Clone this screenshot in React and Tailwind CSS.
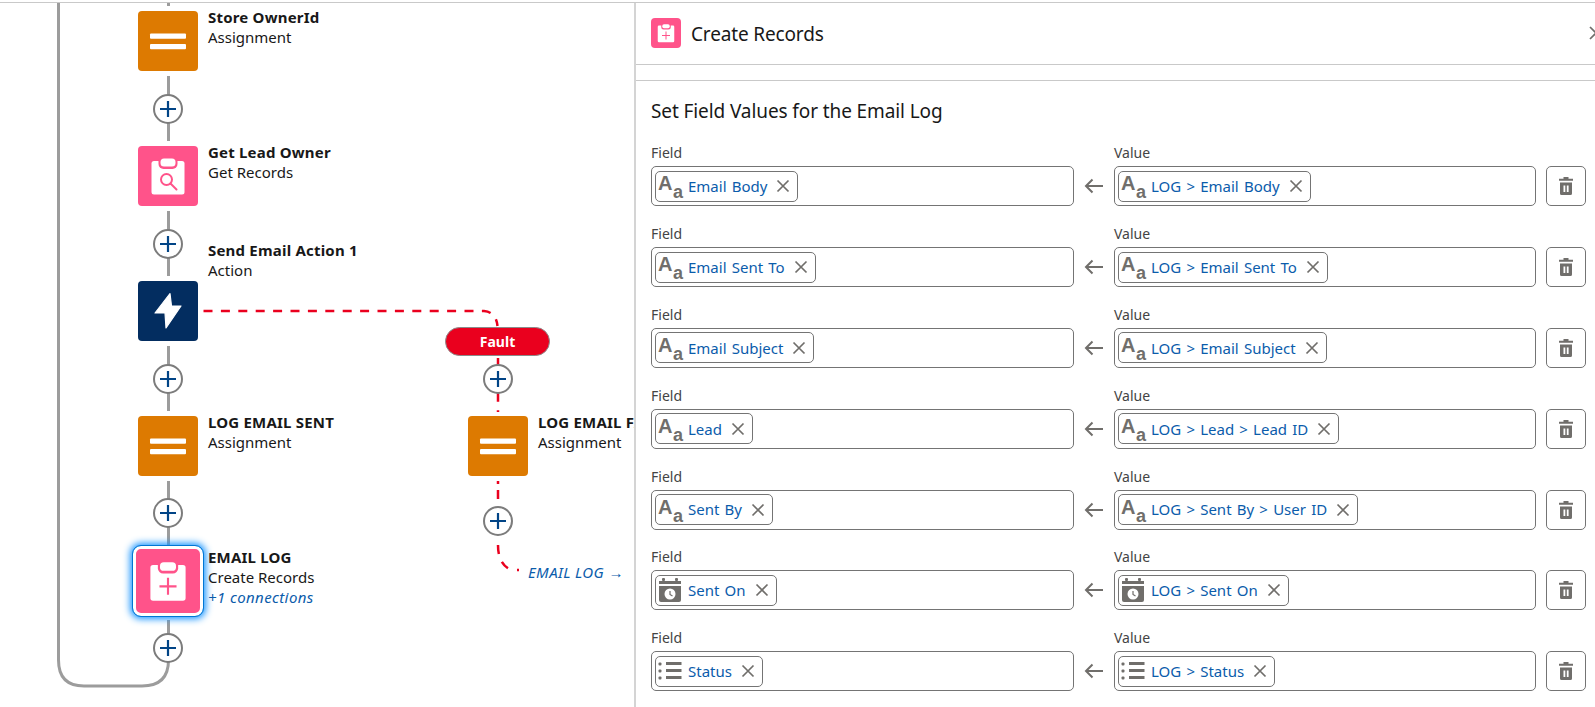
import { Fragment } from 'react';

const font = { fontFamily: '"Noto Sans", "Open Sans", sans-serif' };

function AssignmentGlyph() {
  return (
    <svg viewBox="0 0 60 60" className="w-full h-full">
      <rect x="12" y="22.5" width="36" height="5.2" rx="1" fill="#fff" />
      <rect x="12" y="33" width="36" height="5.2" rx="1" fill="#fff" />
    </svg>
  );
}

function BoltGlyph() {
  return (
    <svg viewBox="0 0 60 60" className="w-full h-full">
      <path d="M32 12.5 L17 32 H27 L28 47 L43 25 H33.5 Z" fill="#fff" stroke="#fff" strokeWidth="1.2" strokeLinejoin="round" />
    </svg>
  );
}

function Clipboard({ kind }) {
  return (
    <svg viewBox="0 0 60 60" className="w-full h-full">
      <rect x="13.5" y="15" width="33" height="33.5" rx="2.5" fill="#fff" />
      <rect x="20.5" y="10.5" width="19" height="12.5" rx="5" fill="#ff538a" />
      <rect x="22.5" y="12.5" width="15" height="8" rx="3.5" fill="#fff" />
      {kind === 'search' ? (
        <g fill="none" stroke="#ff538a" strokeWidth="2">
          <circle cx="28.5" cy="33.5" r="5.5" />
          <path d="M32.5 37.5 L38.5 43.5" strokeLinecap="round" />
        </g>
      ) : (
        <path d="M30 27 V43 M22 35 H38" stroke="#ff538a" strokeWidth="2" fill="none" />
      )}
    </svg>
  );
}

function NodeLabel({ x, y, title, sub, extra }) {
  return (
    <div className="absolute whitespace-nowrap text-[15px] leading-[20px] text-[#181818]" style={{ left: x, top: y }}>
      <div className="font-bold tracking-[0.2px]">{title}</div>
      <div>{sub}</div>
      {extra && <div className="italic tracking-[0.4px] text-[#0b5cab]">{extra}</div>}
    </div>
  );
}

const PLUS = [[168, 109], [168, 244], [168, 379], [168, 513], [168, 648], [498, 379], [498, 521]];

function Connectors() {
  return (
    <svg className="absolute left-0 top-0" width="634" height="704" viewBox="0 3 634 704" fill="none">
      <g stroke="#9c9c9c" strokeWidth="3">
        <path d="M58.5 3 V660 Q58.5 686 84 686 H142 Q168.5 686 168.5 660 V620" />
        <path d="M168.5 3 V6 M168.5 76 V141 M168.5 211 V276 M168.5 346 V411 M168.5 481 V545" />
      </g>
      <g stroke="#ea001e" strokeWidth="2.5" strokeDasharray="9 8.4">
        <path d="M203.5 311 H484 Q496 312 497.5 326" />
        <path d="M498 358 V412" />
        <path d="M498 481 V484" strokeDasharray="none" />
        <path d="M498 490 V536" />
        <path d="M498 545 Q498 564 511 570" />
        <path d="M517 570 H519" strokeDasharray="none" />
      </g>
      {PLUS.map(([cx, cy]) => (
        <Fragment key={`${cx}-${cy}`}>
          <circle cx={cx} cy={cy} r="14" fill="#fff" stroke="#7c7c7c" strokeWidth="2" />
          <path d={`M${cx - 8} ${cy} H${cx + 8} M${cx} ${cy - 8} V${cy + 8}`} stroke="#014486" strokeWidth="2.2" />
        </Fragment>
      ))}
    </svg>
  );
}

function Canvas() {
  return (
    <div className="relative w-[634px] h-full shrink-0 overflow-hidden">
      <Connectors />
      <div className="absolute left-[138px] top-[8px] w-[60px] h-[60px] rounded bg-[#dd7a01]"><AssignmentGlyph /></div>
      <NodeLabel x={208} y={4} title="Store OwnerId" sub="Assignment" />

      <div className="absolute left-[138px] top-[143px] w-[60px] h-[60px] rounded bg-[#ff538a]"><Clipboard kind="search" /></div>
      <NodeLabel x={208} y={139} title="Get Lead Owner" sub="Get Records" />

      <div className="absolute left-[138px] top-[278px] w-[60px] h-[60px] rounded bg-[#032d60]"><BoltGlyph /></div>
      <NodeLabel x={208} y={237} title="Send Email Action 1" sub="Action" />

      <div className="absolute left-[138px] top-[413px] w-[60px] h-[60px] rounded bg-[#dd7a01]"><AssignmentGlyph /></div>
      <NodeLabel x={208} y={409} title="LOG EMAIL SENT" sub="Assignment" />

      <div className="absolute left-[133px] top-[543px] w-[70px] h-[70px] rounded-lg bg-[#ff538a] border-[3px] border-white outline-[1.5px] outline-[#0176d3] shadow-[0_0_7px_3px_#1b96ff]">
        <Clipboard kind="create" />
      </div>
      <NodeLabel x={208} y={544} title="EMAIL LOG" sub="Create Records" extra="+1 connections" />

      <div className="absolute left-[445px] top-[324px] w-[105px] h-[29px] rounded-full bg-[#ea001e] border border-[#8a8a8a] flex items-center justify-center text-white font-bold text-[14px]">Fault</div>

      <div className="absolute left-[468px] top-[413px] w-[60px] h-[60px] rounded bg-[#dd7a01]"><AssignmentGlyph /></div>
      <NodeLabel x={538} y={409} title="LOG EMAIL FAILED" sub="Assignment" />

      <div className="absolute left-[528px] top-[559px] whitespace-nowrap italic text-[15px] leading-[20px] tracking-[0.4px] text-[#0b5cab]">EMAIL LOG →</div>
    </div>
  );
}

function TextIcon() {
  return (
    <div className="w-[25px] h-[24px] shrink-0 flex items-start font-bold text-[#706e6b] [font-family:'Liberation_Sans',sans-serif]">
      <span className="text-[20px] leading-[18px]">A</span>
      <span className="ml-[0.5px] mt-[9px] text-[18px] leading-[18px]">a</span>
    </div>
  );
}

function CalendarIcon() {
  return (
    <svg width="25" height="24" viewBox="0 0 25 24" className="shrink-0">
      <rect x="4" y="0" width="3" height="3" rx="1" fill="#706e6b" />
      <rect x="17" y="0" width="3" height="3" rx="1" fill="#706e6b" />
      <path d="M1 3 H23 V6 H1 Z" fill="#706e6b" />
      <path d="M1 8 H23 V22 a2 2 0 0 1 -2 2 H3 a2 2 0 0 1 -2 -2 Z" fill="#706e6b" />
      <circle cx="12" cy="16" r="5.5" fill="#fff" />
      <path d="M12 13 V16.5 L14.5 18" stroke="#706e6b" strokeWidth="1.2" fill="none" />
    </svg>
  );
}

function ListIcon() {
  return (
    <svg width="25" height="24" viewBox="0 0 25 24" className="shrink-0">
      <rect x="0.5" y="3.5" width="3" height="3" rx="1" fill="#706e6b" />
      <rect x="0.5" y="10.5" width="3" height="3" rx="1" fill="#706e6b" />
      <rect x="0.5" y="17.5" width="3" height="3" rx="1" fill="#706e6b" />
      <rect x="8" y="3" width="15.5" height="3" fill="#706e6b" />
      <rect x="8" y="10" width="15.5" height="3" fill="#706e6b" />
      <rect x="8" y="17" width="15.5" height="3" fill="#706e6b" />
    </svg>
  );
}

function Pill({ type, text }) {
  return (
    <div className="h-[31px] inline-flex items-center gap-[5px] pl-[2px] pr-[7px] border border-[#747474] rounded-[5px] bg-white">
      {type === 'text' && <TextIcon />}
      {type === 'date' && <CalendarIcon />}
      {type === 'list' && <ListIcon />}
      <span className="text-[15px] [word-spacing:1.3px] text-[#0b5cab] whitespace-nowrap">{text}</span>
      <svg width="14" height="14" viewBox="0 0 14 14" className="ml-[4px] shrink-0">
        <path d="M1.5 1.5 L12.5 12.5 M12.5 1.5 L1.5 12.5" stroke="#706e6b" strokeWidth="1.7" />
      </svg>
    </div>
  );
}

function TrashIcon() {
  return (
    <svg width="16" height="18" viewBox="0 0 16 18">
      <path d="M5.5 0 H10.5 V1.8 H15 V3.8 H1 V1.8 H5.5 Z" fill="#706e6b" />
      <path d="M2 5.5 H14 V16.5 a1.5 1.5 0 0 1 -1.5 1.5 H3.5 A1.5 1.5 0 0 1 2 16.5 Z" fill="#706e6b" />
      <rect x="5.5" y="8.5" width="1.8" height="6.5" fill="#fff" />
      <rect x="8.8" y="8.5" width="1.8" height="6.5" fill="#fff" />
    </svg>
  );
}

const ROWS = [
  { type: 'text', field: 'Email Body', value: 'LOG > Email Body' },
  { type: 'text', field: 'Email Sent To', value: 'LOG > Email Sent To' },
  { type: 'text', field: 'Email Subject', value: 'LOG > Email Subject' },
  { type: 'text', field: 'Lead', value: 'LOG > Lead > Lead ID' },
  { type: 'text', field: 'Sent By', value: 'LOG > Sent By > User ID' },
  { type: 'date', field: 'Sent On', value: 'LOG > Sent On' },
  { type: 'list', field: 'Status', value: 'LOG > Status' },
];

function Row({ row }) {
  return (
    <div className="h-[80.8px] shrink-0 flex items-start">
      <div className="w-[423px] shrink-0">
        <div className="h-[23px] text-[14px] leading-[20px] text-[#444444]">Field</div>
        <div className="h-[40px] border border-[#747474] rounded-[5px] flex items-center pl-[3px]">
          <Pill type={row.type} text={row.field} />
        </div>
      </div>
      <div className="w-[40px] shrink-0 h-[63px] pt-[23px] flex items-center justify-center">
        <svg width="20" height="16" viewBox="0 0 20 16">
          <path d="M8.5 1.5 L2 8 L8.5 14.5 M2 8 H19" stroke="#706e6b" strokeWidth="2" fill="none" />
        </svg>
      </div>
      <div className="w-[422px] shrink-0">
        <div className="h-[23px] text-[14px] leading-[20px] text-[#444444]">Value</div>
        <div className="h-[40px] border border-[#747474] rounded-[5px] flex items-center pl-[3px]">
          <Pill type={row.type} text={row.value} />
        </div>
      </div>
      <div className="ml-[10px] mt-[23px] w-[40px] h-[40px] shrink-0 border border-[#747474] rounded-[5px] flex items-center justify-center">
        <TrashIcon />
      </div>
    </div>
  );
}

function Panel() {
  return (
    <div className="flex-1 min-w-0 h-full overflow-hidden border-l-2 border-[#d4d4d4] bg-white text-[#181818]">
      <div className="h-[62px] border-b border-[#c9c9c9] flex items-center pl-[15px] pb-[1px]">
        <div className="w-[30px] h-[30px] rounded bg-[#ff538a] overflow-hidden shrink-0"><Clipboard kind="create" /></div>
        <div className="ml-[10px] mt-[3px] text-[19px] tracking-[-0.15px]">Create Records</div>
        <svg width="14" height="14" viewBox="0 0 14 14" className="ml-auto mr-[-8px] shrink-0">
          <path d="M1 1 L13 13 M13 1 L1 13" stroke="#706e6b" strokeWidth="1.7" />
        </svg>
      </div>
      <div className="h-[16px] border-b border-[#c9c9c9]" />
      <div className="pl-[15px] pt-[18px]">
        <div className="h-[24px] mb-[20.4px] text-[19px] leading-[24px] tracking-[-0.1px] whitespace-nowrap">Set Field Values for the Email Log</div>
        {ROWS.map((row) => <Row key={row.field} row={row} />)}
      </div>
    </div>
  );
}

export default function App() {
  return (
    <div className="w-[1595px] h-[707px] overflow-hidden bg-white pt-[2px]" style={font}>
      <div className="h-[705px] border-t border-[#c9c9c9] flex">
        <Canvas />
        <Panel />
      </div>
    </div>
  );
}
